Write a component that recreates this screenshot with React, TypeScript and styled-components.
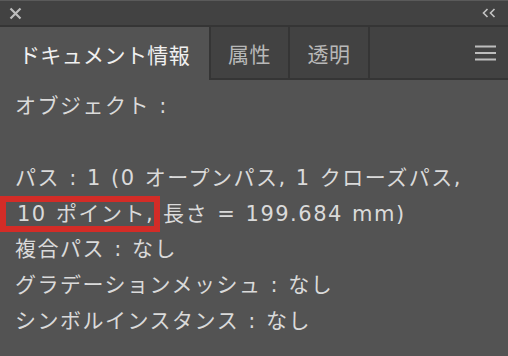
import React from "react";
import styled, { createGlobalStyle } from "styled-components";

const GlobalStyle = createGlobalStyle`
  html, body {
    margin: 0;
    padding: 0;
    background: #535353;
  }
  body {
    font-family: "Noto Sans CJK JP", "Noto Sans", sans-serif;
  }
`;

const Panel = styled.div`
  width: 508px;
  height: 356px;
  display: flex;
  flex-direction: column;
  background: #535353;
  overflow: hidden;
`;

const TopBar = styled.div`
  height: 24px;
  display: flex;
  align-items: center;
  justify-content: space-between;
  padding: 0 12px 0 9px;
  background: #424242;
  border-top: 1px solid #5a5a5a;
  border-bottom: 2px solid #353535;
`;

const TabRow = styled.div`
  display: flex;
  height: 53px;
  background: #424242;
`;

const Tab = styled.div<{ $active?: boolean; $width: number }>`
  display: flex;
  align-items: center;
  justify-content: center;
  box-sizing: border-box;
  width: ${(p) => p.$width}px;
  background: ${(p) => (p.$active ? "#535353" : "#424242")};
  color: ${(p) => (p.$active ? "#f0f0f0" : "#b8b8b8")};
  font-size: 21px;
  letter-spacing: ${(p) => (p.$active ? "0.4px" : "0.6px")};
  border-right: 2px solid #353535;
  border-bottom: ${(p) => (p.$active ? "none" : "2px solid #353535")};
`;

const TabFill = styled.div`
  flex: 1;
  display: flex;
  align-items: center;
  justify-content: flex-end;
  padding-right: 12px;
  border-bottom: 2px solid #353535;
`;

// Latin glyphs in the reference are wide, so DejaVu Sans carries them and kana fall back to Noto CJK
const Body = styled.div`
  padding: 9px 0 0 15px;
  color: #dadada;
  font-family: "DejaVu Sans", "Noto Sans CJK JP", sans-serif;
  font-size: 21px;
  letter-spacing: 1.5px;
  word-spacing: 1px;
`;

const Line = styled.div`
  white-space: nowrap;
  height: 35.8px;
  line-height: 35.8px;
`;

const Highlight = styled.span`
  display: inline-block;
  margin-left: -15px;
  margin-right: 3px;
  padding: 0 0 0 11px;
  border: 6px solid #d32c27;
  line-height: 24px;
`;

const CloseIcon = () => (
  <svg width="13" height="13" viewBox="0 0 13 13">
    <path d="M1.5 1.5 L11.5 11.5 M11.5 1.5 L1.5 11.5" stroke="#bdbdbd" strokeWidth="2.2" />
  </svg>
);

const CollapseIcon = () => (
  <svg width="14" height="10" viewBox="0 0 14 10">
    <path d="M5.5 1 L1.5 5 L5.5 9 M12.5 1 L8.5 5 L12.5 9" stroke="#c4c4c4" strokeWidth="1.6" fill="none" />
  </svg>
);

const MenuIcon = () => (
  <svg width="21" height="16" viewBox="0 0 21 16">
    <path d="M0 1.5 H21 M0 8 H21 M0 14.5 H21" stroke="#bdbdbd" strokeWidth="2" />
  </svg>
);

export default function App() {
  return (
    <>
      <GlobalStyle />
      <Panel>
        <TopBar>
          <CloseIcon />
          <CollapseIcon />
        </TopBar>
        <TabRow>
          <Tab $active $width={211}>ドキュメント情報</Tab>
          <Tab $width={79}>属性</Tab>
          <Tab $width={80}>透明</Tab>
          <TabFill>
            <MenuIcon />
          </TabFill>
        </TabRow>
        <Body>
          <Line>オブジェクト :</Line>
          <Line></Line>
          <Line>パス : 1 (0 オープンパス, 1 クローズパス,</Line>
          <Line>
            <Highlight>10 ポイント,</Highlight>長さ = 199.684 mm)
          </Line>
          <Line>複合パス : なし</Line>
          <Line>グラデーションメッシュ : なし</Line>
          <Line>シンボルインスタンス : なし</Line>
        </Body>
      </Panel>
    </>
  );
}
